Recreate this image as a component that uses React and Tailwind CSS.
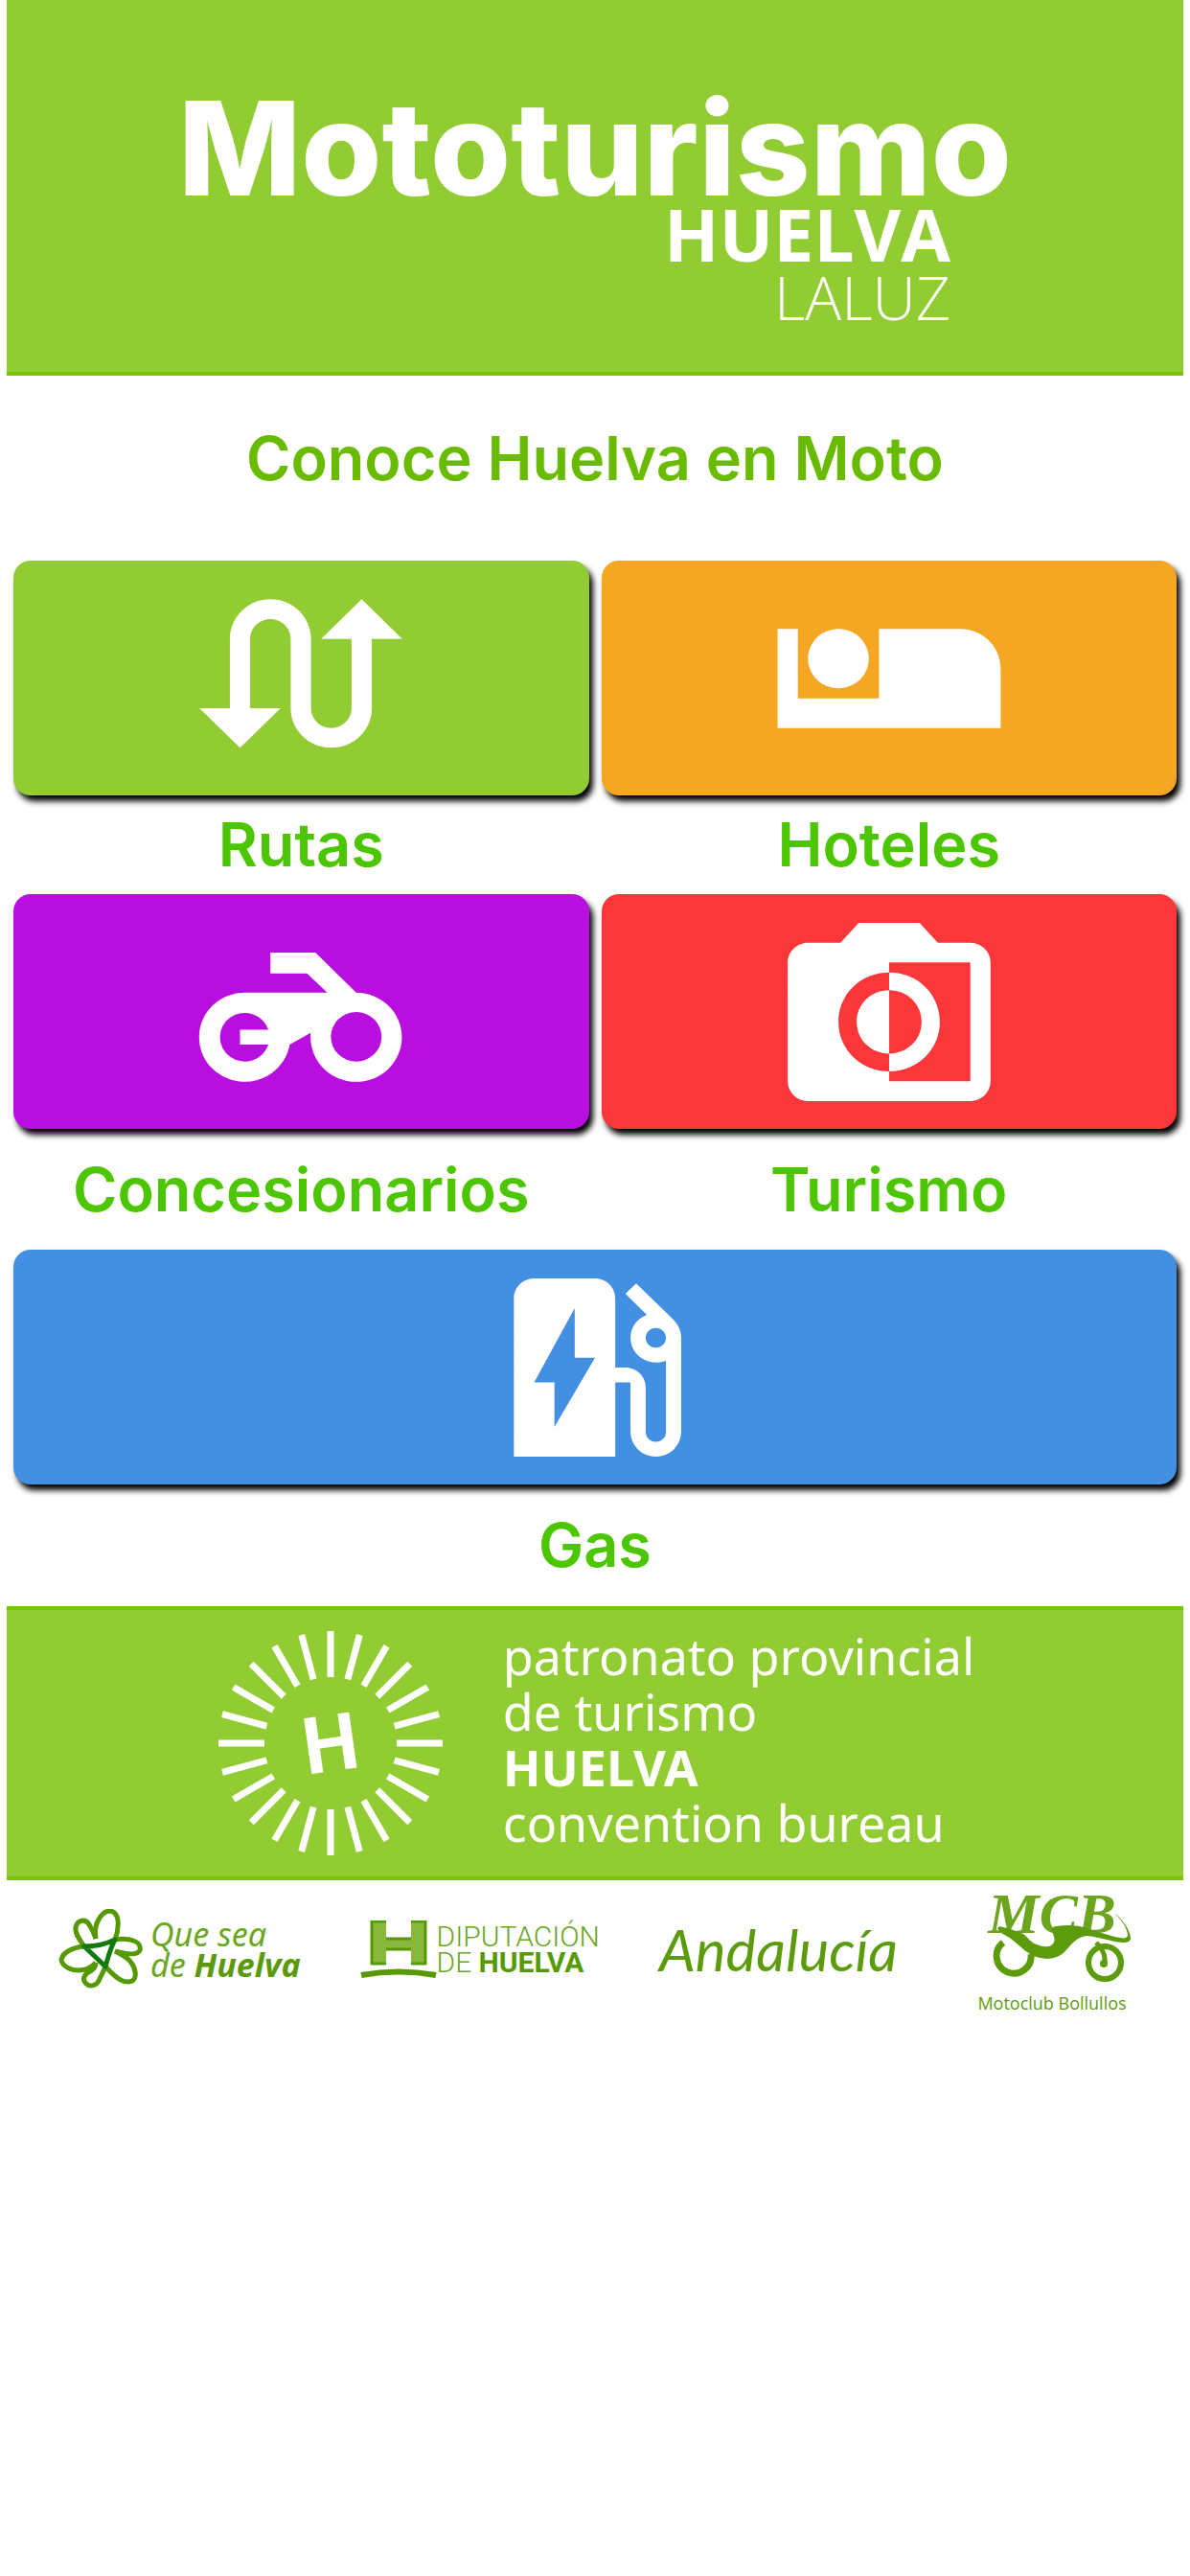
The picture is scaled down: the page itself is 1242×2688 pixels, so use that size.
const RAYS = Array.from({ length: 24 }, (_, i) => i * 15);

function TileIcon({ d }) {
  return (
    <svg viewBox="0 0 24 24" preserveAspectRatio="none" fill="currentColor" fillRule="evenodd" className="h-[248px] w-[254px]" aria-hidden="true">
      <path d={d} />
    </svg>
  );
}

const ICONS = {
  rutas:
    "M18 4l-4 4h3v7c0 1.1-.9 2-2 2s-2-.9-2-2V8c0-2.21-1.79-4-4-4S5 5.79 5 8v7H2l4 4 4-4H7V8c0-1.1.9-2 2-2s2 .9 2 2v7c0 2.21 1.79 4 4 4s4-1.79 4-4V8h3l-4-4z",
  hoteles:
    "M7 13c1.65 0 3-1.35 3-3S8.65 7 7 7s-3 1.35-3 3 1.35 3 3 3zm12-6h-8v7H3V7H1v10h22v-6c0-2.21-1.79-4-4-4z",
  concesionarios:
    "M13.44 6H9v2.1h3.6l2 1.95H6.5A4.5 4.5 0 1 0 10.9 15.3L12.96 14.1v.4a4.5 4.5 0 1 0 4.5-4.45zM6 13.8h2.8A2.45 2.45 0 1 0 8.8 15.3H6zM17.46 12a2.5 2.5 0 1 1 0 5 2.5 2.5 0 0 1 0-5z",
  turismo:
    "M20 5h-3.2L15 3H9L7.2 5H4c-1.1 0-2 .9-2 2v12c0 1.1.9 2 2 2h16c1.1 0 2-.9 2-2V7c0-1.1-.9-2-2-2zm0 14h-8v-1c-2.8 0-5-2.2-5-5s2.2-5 5-5V7h8v12zm-3-6c0-2.8-2.2-5-5-5v1.8c1.8 0 3.2 1.4 3.2 3.2s-1.4 3.2-3.2 3.2V18c2.8 0 5-2.2 5-5zm-8.2 0c0 1.8 1.4 3.2 3.2 3.2V9.8c-1.8 0-3.2 1.4-3.2 3.2z",
  gas: "M19.77 7.23l.01-.01-3.72-3.72L15 4.56l2.11 2.11c-.94.36-1.61 1.26-1.61 2.33a2.5 2.5 0 0 0 2.5 2.5c.36 0 .69-.08 1-.21v7.21c0 .55-.45 1-1 1s-1-.45-1-1V14c0-1.1-.9-2-2-2h-1V5c0-1.1-.9-2-2-2H6c-1.1 0-2 .9-2 2v16h10v-7.5h1.5v5a2.5 2.5 0 0 0 5 0V9c0-.69-.28-1.32-.73-1.77zM18 10c-.55 0-1-.45-1-1s.45-1 1-1 1 .45 1 1-.45 1-1 1zM8 18v-4.5H6L10 6v5h2l-4 7z",
};

function Tile({ id, label, color, labelClass, className = "" }) {
  return (
    <div className={className}>
      <button
        type="button"
        aria-labelledby={id}
        className={`flex h-[245px] w-full items-center justify-center overflow-hidden rounded-[18px] text-white shadow-[4px_6px_6px_#000] ${color}`}
      >
        <TileIcon d={ICONS[id]} />
      </button>
      <p id={id} className={`text-center text-[63px] font-semibold text-[#4bc600] ${labelClass}`}>
        {label}
      </p>
    </div>
  );
}

function Sunburst() {
  return (
    <svg viewBox="-120 -118 240 236" className="h-[236px] w-[240px] shrink-0" aria-label="H">
      {RAYS.map((angle) => (
        <line key={angle} x1="0" y1="-69" x2="0" y2="-117" stroke="white" strokeWidth="7" transform={`rotate(${angle})`} />
      ))}
      <text
        x="0"
        y="29"
        textAnchor="middle"
        transform="rotate(-8)"
        className="fill-white font-['Roboto',sans-serif] text-[82px] font-bold"
      >
        H
      </text>
    </svg>
  );
}

function QueSeaLogo() {
  return (
    <div className="mt-[22px] flex h-[84px] items-center gap-2">
      <svg viewBox="0 0 88 84" className="h-[84px] w-[88px]" fill="none" stroke="#559900" strokeWidth="5" strokeLinejoin="round" aria-hidden="true">
        <path d="M27 39C21 31 17 25 18 19c2-8 10-9 14-3 3 5 5 9 7 15" />
        <path d="M39 31c-1-7-1-14 3-20C45 5 49 2 54 2c7 1 9 9 8 16 0 6-1 9-3 14" />
        <path d="M59 32c7-1 14-1 19 1 6 2 8 6 7 10-2 5-11 5-26 1" />
        <path d="M59 44c8 4 14 7 17 12 5 7 6 16 1 19-9 4-18-4-28-15" />
        <path d="M49 60c-3 7-5 11-7 15-3 6-10 6-13 3-4-4-3-8 1-11 5-3 9-5 9-11" />
        <path d="M39 56c-6 7-12 8-18 8C13 64 4 60 3 53c1-7 11-13 24-14" />
        <path d="M27 39c10 0 22-2 32-7-5 9-7 18-10 28z" stroke="#117a0c" />
      </svg>
      <p className="font-['Noto_Sans',sans-serif] text-[34px] leading-8 text-[#6aa61f] italic">
        Que sea
        <br />
        de <b className="text-[#5a9a0c]">Huelva</b>
      </p>
    </div>
  );
}

function DiputacionLogo() {
  return (
    <div className="mt-[22px] flex h-[84px] items-center">
      <svg viewBox="0 0 80 60" className="h-[60px] w-[80px]" aria-hidden="true">
        <path d="M11 0h16v18h26V0h16v46H53V31H27v15H11z" fill="#8ab83c" />
        <path d="M11 1h16M53 1h16M11 45h16M53 45h16M27 19h26M27 30h26M12 0v46M68 0v46" stroke="#559a00" strokeWidth="3" />
        <path d="M1 57q39-7 78 0" fill="none" stroke="#559a00" strokeWidth="6" />
      </svg>
      <p className="font-['Roboto',sans-serif] text-[30px] leading-[27px] font-light text-[#6aa61f]">
        DIPUTACIÓN
        <br />
        DE <b className="font-bold text-[#559a00]">HUELVA</b>
      </p>
    </div>
  );
}

function MotoclubLogo() {
  return (
    <div className="ml-4 flex flex-col items-center text-[#5c9c0c]">
      <p className="font-['Liberation_Serif',serif] text-[60px] leading-[54px] font-bold text-[#6ba41d] italic">MCB</p>
      <svg viewBox="0 -10 166 76" className="-mt-[30px] h-[76px] w-[166px]" fill="none" stroke="currentColor" aria-hidden="true">
        <path
          d="M26 8q2-3 6-1c8 2 15 4 21 7 6 5 8 9 14 11q9 4 15 1c6-4 3-9 1-15 0-4 2-5 5-5 12-2 22-1 31 2 14 4 24 8 35 10 5 1 8 0 8-3-1-8-6-15-14-23 10 8 16 18 17 26 0 4-3 5-8 5-14-1-24-6-38-7-7 1-11 4-16 9-6 6-9 14-25 15-18-1-24-10-38-21-6-4-12-6-14-11z"
          fill="currentColor"
          stroke="none"
        />
        <path d="M32 23a18 18 0 1 0 29 12" strokeWidth="7" />
        <circle cx="138" cy="44" r="17" strokeWidth="6" />
        <path d="M129 23q10 9 9 21" strokeWidth="5" />
        <circle cx="137" cy="45" r="4" fill="currentColor" stroke="none" />
      </svg>
      <p className="font-['Open_Sans',sans-serif] text-[18px] leading-10">Motoclub Bollullos</p>
    </div>
  );
}

export default function App() {
  return (
    <div className="min-h-screen bg-white font-['Inter',sans-serif]">
      {/* Cabecera */}
      <header className="mx-[7px] flex justify-center border-b-4 border-[#78c400] bg-[#92cc33] pt-[102px] pb-[49px] text-white">
        <div className="w-fit text-right">
          <h1 className="text-[136px] leading-[106px] font-extrabold">Mototurismo</h1>
          <p className="pr-16 font-['Open_Sans',sans-serif] text-[75px] leading-[72px] font-bold">HUELVA</p>
          <p className="pr-16 font-['Open_Sans',sans-serif] text-[63px] leading-[59px] font-light">LALUZ</p>
        </div>
      </header>

      <h2 className="pt-[38px] pb-[58px] text-center text-[63px] leading-[97px] font-semibold text-[#69bb00]">
        Conoce Huelva en Moto
      </h2>

      {/* Menú */}
      <main className="grid grid-cols-2 gap-x-[13px] px-[14px]">
        <Tile id="rutas" label="Rutas" color="bg-[#92cc33]" labelClass="leading-[103px]" />
        <Tile id="hoteles" label="Hoteles" color="bg-[#f5a623]" labelClass="leading-[103px]" />
        <Tile id="concesionarios" label="Concesionarios" color="bg-[#b80ee0]" labelClass="leading-[126px]" />
        <Tile id="turismo" label="Turismo" color="bg-[#fc373a]" labelClass="leading-[126px]" />
        <Tile id="gas" label="Gas" color="bg-[#4390e3]" labelClass="leading-[127px]" className="col-span-2" />
      </main>

      {/* Patronato */}
      <section className="mx-[7px] flex items-center justify-center gap-[60px] border-y-4 border-[#78c400] bg-[#92cc33] py-[19px] text-white">
        <Sunburst />
        <p className="pb-2 font-['Noto_Sans',sans-serif] text-[52px] leading-[58px]">
          patronato provincial
          <br />
          de turismo
          <br />
          <b>HUELVA</b>
          <br />
          convention bureau
        </p>
      </section>

      {/* Colaboradores */}
      <footer className="flex items-start justify-between px-[61px] pt-2">
        <QueSeaLogo />
        <DiputacionLogo />
        <p className="mt-[22px] font-['Lato',sans-serif] text-[60px] leading-[84px] text-[#5c9c0c] italic">Andalucía</p>
        <MotoclubLogo />
      </footer>
    </div>
  );
}
